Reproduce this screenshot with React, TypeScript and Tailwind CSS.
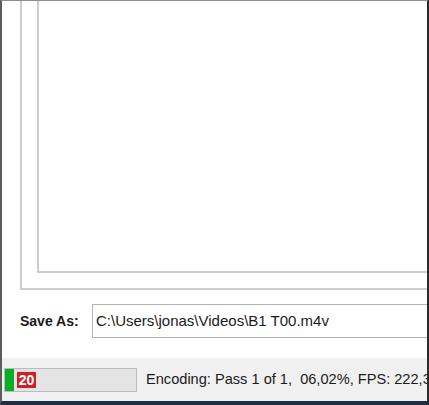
import React from "react";

const font = { fontFamily: '"Liberation Sans", Arial, sans-serif' };

export default function App() {
  return (
    <div
      className="w-[429px] h-[405px] flex flex-col overflow-hidden bg-white border-l-2 border-l-[#5c5c5c] border-r-2 border-r-[#2a2a2a] border-t border-t-[#8c8c8c] border-b-4 border-b-[#1f2d44] text-[#1a1a1a]"
      style={font}
    >
      {/* preview frames */}
      <div className="h-[289px] shrink-0 ml-[18px] border-l-2 border-b-2 border-[#cdcdcd] flex flex-col">
        <div className="h-[272px] ml-[15px] border-l-2 border-b-2 border-[#cdcdcd]" />
      </div>

      {/* save as */}
      <div className="flex items-center mt-[14px] h-[34px] shrink-0">
        <span className="ml-[18px] w-[72px] shrink-0 text-[14px] font-bold">Save As:</span>
        <div className="flex-1 h-[34px] border border-r-0 border-[#b4b4b4] flex items-center pl-[3px] text-[15px] whitespace-nowrap overflow-hidden">
          C:\Users\jonas\Videos\B1 T00.m4v
        </div>
      </div>

      <div className="flex-1" />

      {/* status bar */}
      <div className="h-[43px] shrink-0 bg-[#f0f0f0] flex items-center pl-[2px] whitespace-nowrap overflow-hidden">
        <div className="w-[133px] h-[24px] shrink-0 border border-[#bcbcbc] bg-[#e4e4e4] flex items-center">
          <div className="w-[9px] h-full bg-[#06b025]" />
          <div className="ml-[3px] w-[19px] h-[16px] bg-[#c8242c] text-white text-[14px] font-bold leading-[16px] flex items-center justify-center">
            20
          </div>
        </div>
        <span className="ml-[9px] shrink-0 text-[14.6px]">Encoding: Pass 1 of 1,&nbsp; 06,02%, FPS: 222,3</span>
      </div>
    </div>
  );
}
